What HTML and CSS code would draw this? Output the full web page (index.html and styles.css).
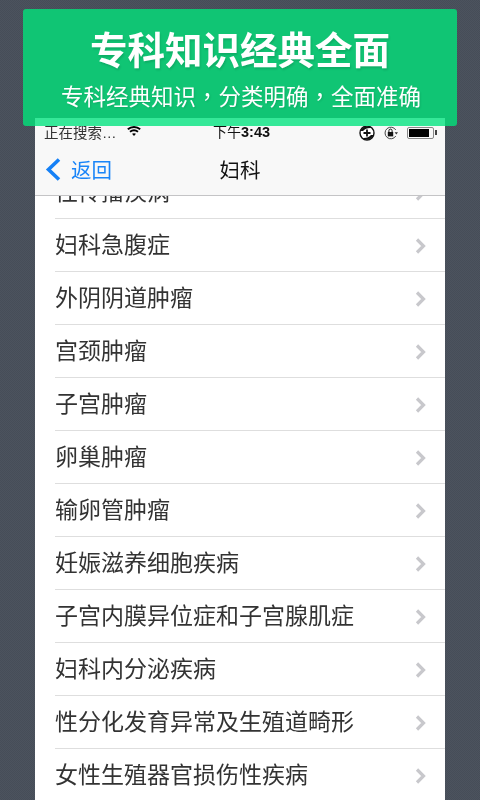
FILE: index.html
```html
<!DOCTYPE html>
<html lang="zh-Hans">
<head>
<meta charset="utf-8">
<title>专科知识经典全面</title>
<link rel="stylesheet" href="styles.css">
</head>
<body>
<header class="banner">
  <h1 class="banner-title">专科知识经典全面</h1>
  <p class="banner-sub">专科经典知识<span class="punc" lang="zh-Hant">，</span>分类明确<span class="punc" lang="zh-Hant">，</span>全面准确</p>
</header>
<main class="phone">
  <div class="strip"></div>
  <div class="topbar">
    <div class="status">
      <div class="status-left">
        <span class="carrier">正在搜索…</span>
        <svg class="wifi" viewBox="0 0 14 10"><path d="M.8 3.300C4.400.2 9.600.2 13.200 3.300" fill="none" stroke="#000" stroke-width="1.900"/><path d="M3 5.800c2.500-2 5.500-2 8 0" fill="none" stroke="#000" stroke-width="1.900"/><path d="M7 10 5 7.800c1.200-.9 2.800-.9 4 0z" fill="#000"/></svg>
      </div>
      <span class="time">下午<b class="digits">3:43</b></span>
      <div class="status-right">
        <svg class="ic-plus" viewBox="0 0 16 16"><circle cx="8" cy="8" r="7" fill="#fff" stroke="#111" stroke-width="1.400"/><path d="M1.500 6a7 7 0 0 1 11-3Q7 2.500 4 6z" fill="#111"/><path d="M14.500 10a7 7 0 0 1-11 3Q9 13.500 12 10z" fill="#111"/><path d="M8 4.500v7M4.500 8h7" stroke="#111" stroke-width="1.800"/></svg>
        <svg class="ic-lock" viewBox="0 0 14 14"><path d="M11.800 4A5.800 5.800 0 1 0 11.800 10" fill="none" stroke="#333" stroke-width=".9"/><path d="M10.600 6.200H14L12.300 8.600z" fill="#333"/><rect x="3.800" y="6" width="5.400" height="4.400" fill="#111"/><path d="M4.900 6V4.700a1.600 1.600 0 0 1 3.200 0V6" fill="none" stroke="#111" stroke-width="1"/></svg>
        <div class="battery"><div class="battery-fill"></div></div>
      </div>
    </div>
    <nav class="navbar">
      <div class="back">
        <svg class="back-ic" viewBox="0 0 17 25"><path d="M14 2.500 3.500 12.500 14 22.500" fill="none" stroke="#1580f6" stroke-width="3.600"/></svg>
        <span class="back-label">返回</span>
      </div>
      <span class="nav-title">妇科</span>
    </nav>
  </div>
  <div class="list-view">
    <ul class="list">
      <li class="row"><span class="row-label">性传播疾病</span><svg class="chev" viewBox="0 0 11 16"><path d="M2 1.500 8.500 8 2 14.500" fill="none" stroke="#c8c8cc" stroke-width="3.200"/></svg></li>
      <li class="row"><span class="row-label">妇科急腹症</span><svg class="chev" viewBox="0 0 11 16"><path d="M2 1.500 8.500 8 2 14.500" fill="none" stroke="#c8c8cc" stroke-width="3.200"/></svg></li>
      <li class="row"><span class="row-label">外阴阴道肿瘤</span><svg class="chev" viewBox="0 0 11 16"><path d="M2 1.500 8.500 8 2 14.500" fill="none" stroke="#c8c8cc" stroke-width="3.200"/></svg></li>
      <li class="row"><span class="row-label">宫颈肿瘤</span><svg class="chev" viewBox="0 0 11 16"><path d="M2 1.500 8.500 8 2 14.500" fill="none" stroke="#c8c8cc" stroke-width="3.200"/></svg></li>
      <li class="row"><span class="row-label">子宫肿瘤</span><svg class="chev" viewBox="0 0 11 16"><path d="M2 1.500 8.500 8 2 14.500" fill="none" stroke="#c8c8cc" stroke-width="3.200"/></svg></li>
      <li class="row"><span class="row-label">卵巢肿瘤</span><svg class="chev" viewBox="0 0 11 16"><path d="M2 1.500 8.500 8 2 14.500" fill="none" stroke="#c8c8cc" stroke-width="3.200"/></svg></li>
      <li class="row"><span class="row-label">输卵管肿瘤</span><svg class="chev" viewBox="0 0 11 16"><path d="M2 1.500 8.500 8 2 14.500" fill="none" stroke="#c8c8cc" stroke-width="3.200"/></svg></li>
      <li class="row"><span class="row-label">妊娠滋养细胞疾病</span><svg class="chev" viewBox="0 0 11 16"><path d="M2 1.500 8.500 8 2 14.500" fill="none" stroke="#c8c8cc" stroke-width="3.200"/></svg></li>
      <li class="row"><span class="row-label">子宫内膜异位症和子宫腺肌症</span><svg class="chev" viewBox="0 0 11 16"><path d="M2 1.500 8.500 8 2 14.500" fill="none" stroke="#c8c8cc" stroke-width="3.200"/></svg></li>
      <li class="row"><span class="row-label">妇科内分泌疾病</span><svg class="chev" viewBox="0 0 11 16"><path d="M2 1.500 8.500 8 2 14.500" fill="none" stroke="#c8c8cc" stroke-width="3.200"/></svg></li>
      <li class="row"><span class="row-label">性分化发育异常及生殖道畸形</span><svg class="chev" viewBox="0 0 11 16"><path d="M2 1.500 8.500 8 2 14.500" fill="none" stroke="#c8c8cc" stroke-width="3.200"/></svg></li>
      <li class="row"><span class="row-label">女性生殖器官损伤性疾病</span><svg class="chev" viewBox="0 0 11 16"><path d="M2 1.500 8.500 8 2 14.500" fill="none" stroke="#c8c8cc" stroke-width="3.200"/></svg></li>
    </ul>
  </div>
</main>
</body>
</html>
```
FILE: styles.css
```css
* { box-sizing: border-box; }
html, body { margin: 0; height: 100%; }
body {
  width: 480px;
  height: 800px;
  overflow: hidden;
  position: relative;
  padding: 118px 35px 0;
  font-family: "Noto Sans CJK SC", "Liberation Sans", sans-serif;
  background: repeating-conic-gradient(#4c535e 0 25%, #464d58 0 50%) 0 0 / 2px 2px;
}
.banner {
  position: absolute;
  left: 23px;
  top: 9px;
  width: 434px;
  height: 117px;
  background: #10c574;
  border-radius: 3px;
  color: #fff;
  text-align: center;
  z-index: 1;
  filter: blur(0.4px);
}
.banner-title {
  margin: 14px 0 0;
  font-size: 37.5px;
  line-height: 50px;
  font-weight: 700;
  text-shadow: 1px 2px 2px rgba(0,0,0,.12);
}
.banner-sub {
  margin: 6px 0 0;
  padding-left: 2px;
  font-size: 22.5px;
  line-height: 32px;
  font-weight: 400;
  text-shadow: 1px 1px 2px rgba(0,0,0,.12);
}
.punc { font-family: "Noto Sans CJK TC", sans-serif; }
.phone {
  position: relative;
  z-index: 2;
  width: 410px;
  height: 682px;
  background: #fff;
  display: flex;
  flex-direction: column;
  filter: blur(0.4px);
}
.strip {
  position: absolute;
  z-index: 1;
  left: 0;
  top: 0;
  width: 100%;
  height: 8px;
  background: #35e898;
}
.topbar {
  flex: none;
  height: 78px;
  background: #f8f8f8;
  border-bottom: 1px solid #c4c4c6;
  position: relative;
}
.status {
  height: 26px;
  padding: 0 11px 0 9px;
  display: flex;
  align-items: center;
  justify-content: space-between;
  position: relative;
  color: #222;
  font-size: 14.500px;
}
.status-left { display: flex; align-items: center; gap: 10px; }
.carrier { color: #333; font-family: "Liberation Sans", "Noto Sans CJK SC", sans-serif; }
.wifi { width: 14px; height: 10px; display: block; }
.time { position: absolute; left: 178px; top: 1px; line-height: 24px; color: #111; font-size: 14px; }
.digits { font-family: "Liberation Sans", sans-serif; font-weight: 700; font-size: 14.500px; }
.status-right { display: flex; align-items: center; gap: 9px; padding-top: 4px; }
.ic-plus { width: 16px; height: 16px; display: block; }
.ic-lock { width: 14px; height: 14px; display: block; }
.battery {
  width: 27px;
  height: 12px;
  border: 1px solid #888;
  border-radius: 2px;
  padding: 1px;
  position: relative;
}
.battery::after {
  content: "";
  position: absolute;
  right: -4px;
  top: 2px;
  width: 2px;
  height: 5px;
  background: #444;
}
.battery-fill { width: 85%; height: 100%; background: #000; }
.navbar {
  height: 51px;
  position: relative;
  display: flex;
  align-items: center;
  justify-content: center;
  font-size: 20.500px;
}
.back {
  position: absolute;
  left: 10px;
  top: 0;
  height: 100%;
  display: flex;
  align-items: center;
  gap: 9px;
  color: #1a85f8;
}
.back-ic { width: 17px; height: 25px; display: block; }
.back-label { padding-bottom: 1px; }
.nav-title { color: #111; padding-bottom: 1px; }
.list-view { flex: 1; overflow: hidden; }
.list { list-style: none; margin: -30px 0 0; padding: 0; }
.row {
  height: 53px;
  margin-left: 20px;
  padding-right: 19px;
  border-bottom: 1px solid #dedede;
  display: flex;
  align-items: center;
  justify-content: space-between;
  font-size: 23px;
  color: #333;
}
.row-label { padding-bottom: 5px; }
.chev { width: 11px; height: 16px; display: block; margin-top: 2px; }
```
